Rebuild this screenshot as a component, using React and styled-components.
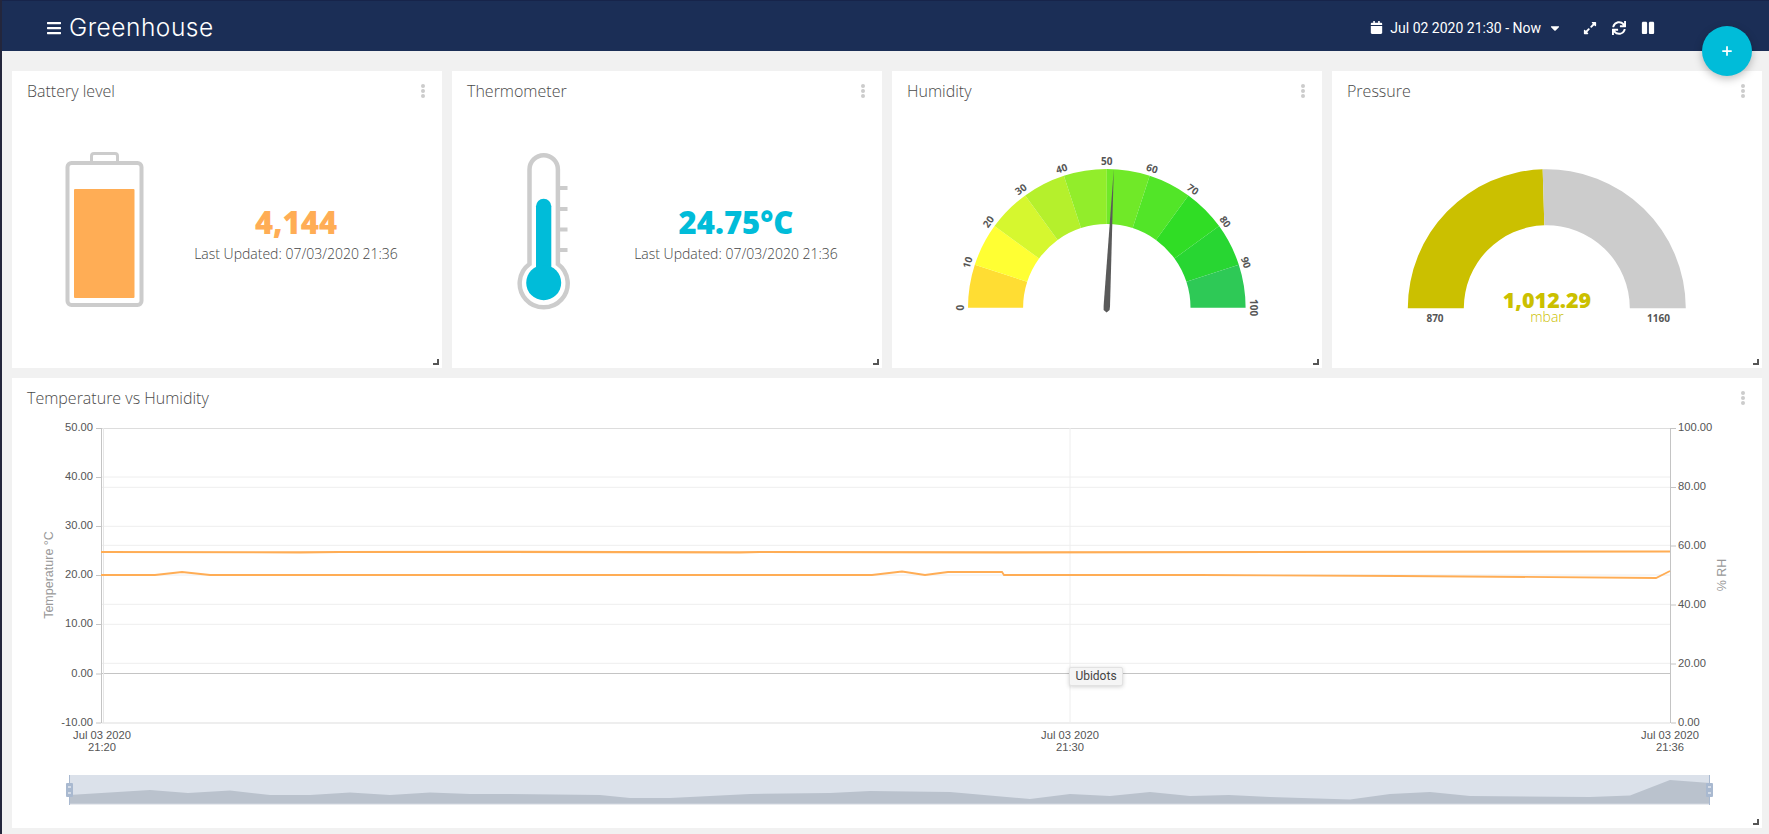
import React from 'react';
import styled, { createGlobalStyle } from 'styled-components';
import { FaBars, FaCalendar, FaCaretDown, FaExpandAlt, FaPause, FaSync } from 'react-icons/fa';
import { Plus } from 'lucide-react';

const GlobalStyle = createGlobalStyle`
    html, body {
        margin: 0;
        padding: 0;
        height: 100%;
        overflow: hidden;
        background: #f1f1f1;
    }
`;

const Page = styled.div`
    position: relative;
    display: flex;
    width: 1769px;
    height: 834px;
    overflow: hidden;
    background: #f1f1f1;
    font-family: "Open Sans", sans-serif;
`;

const Strip = styled.div`
    flex: 0 0 2px;
    background: #23263c;
`;

const Main = styled.div`
    flex: 1;
    display: flex;
    flex-direction: column;
`;

const NavBar = styled.header`
    display: flex;
    align-items: center;
    justify-content: space-between;
    box-sizing: border-box;
    height: 51px;
    padding: 3px 114px 0 45px;
    background: #1b2e56;
    border-top: 1px solid #17244a;
    color: #fff;
`;

const Brand = styled.div`
    display: flex;
    align-items: center;
    gap: 8px;
    font-family: Inter, sans-serif;
    font-size: 24.5px;
    font-weight: 300;
    letter-spacing: 0.5px;
    svg {
        width: 14px;
        height: 16px;
    }
    span {
        margin-bottom: 2px;
    }
`;

const Tools = styled.div`
    display: flex;
    align-items: center;
    font-family: Roboto, sans-serif;
    font-size: 14px;
`;

const DateRange = styled.div`
    display: flex;
    align-items: center;
    gap: 7px;
    margin-right: 21px;
`;

const ToolIcon = styled.span`
    display: flex;
    width: ${(p) => p.$size}px;
    height: ${(p) => p.$size}px;
    margin-left: ${(p) => p.$gap || 0}px;
    svg {
        width: 100%;
        height: 100%;
    }
`;

const Board = styled.main`
    display: flex;
    flex-direction: column;
    gap: 10px;
    padding: 20px 7px 0 10px;
`;

const CardRow = styled.section`
    display: grid;
    grid-template-columns: repeat(4, 430px);
    gap: 10px;
`;

const Card = styled.article`
    position: relative;
    display: flex;
    flex-direction: column;
    height: ${(p) => p.$height}px;
    background: #fff;
`;

const CardTitle = styled.h3`
    flex: 0 0 40px;
    margin: 0;
    padding-left: 15px;
    color: #4a4a4a;
    font-size: 16px;
    font-weight: 300;
    line-height: 40px;
`;

const MenuDots = styled.div`
    position: absolute;
    top: 13px;
    right: 17px;
    display: flex;
    flex-direction: column;
    gap: 1px;
    i {
        width: 4px;
        height: 4px;
        border-radius: 50%;
        background: #ccc;
    }
`;

const ResizeHandle = styled.div`
    position: absolute;
    right: 3px;
    bottom: 3px;
    width: 4px;
    height: 4px;
    border-right: 2px solid #555;
    border-bottom: 2px solid #555;
`;

const MetricBody = styled.div`
    flex: 1;
    display: flex;
    padding-left: 17px;
`;

const MetricIcon = styled.svg`
    flex: 0 0 151px;
    width: 151px;
    height: 257px;
`;

const MetricText = styled.div`
    flex: 0 0 232px;
    display: flex;
    flex-direction: column;
    align-items: center;
    padding-top: 90px;
    white-space: nowrap;
`;

const MetricValue = styled.div`
    color: ${(p) => p.$color};
    font-size: 31px;
    font-weight: 800;
    line-height: 42px;
`;

const MetricDate = styled.div`
    color: #444;
    font-size: 14px;
    font-weight: 300;
    line-height: 22px;
`;

const GaugeSvg = styled.svg`
    width: 430px;
    height: 257px;
`;

const GaugeLabel = styled.text`
    fill: #555;
    font-family: "Open Sans", sans-serif;
    font-size: 10px;
    font-weight: 700;
    text-anchor: middle;
    dominant-baseline: central;
`;

const GaugeValue = styled.text`
    fill: #cbc000;
    font-family: "Open Sans", sans-serif;
    font-size: ${(p) => p.$size}px;
    font-weight: ${(p) => p.$weight};
    text-anchor: middle;
    dominant-baseline: central;
`;

const ChartSvg = styled.svg`
    display: block;
    width: 1750px;
    height: 410px;
`;

const AxisText = styled.text`
    fill: #555;
    font-family: "Liberation Sans", sans-serif;
    font-size: 11.2px;
    text-anchor: ${(p) => p.$anchor || 'middle'};
    dominant-baseline: central;
`;

const AxisTitle = styled.text`
    fill: #999;
    font-family: "Liberation Sans", sans-serif;
    font-size: 12.5px;
    text-anchor: middle;
    dominant-baseline: central;
`;

const ChartTip = styled.div`
    position: absolute;
    left: 1057px;
    top: 289px;
    box-sizing: border-box;
    width: 54px;
    height: 19px;
    background: #f5f5f5;
    border: 1px solid #e2e2e2;
    border-radius: 2px;
    box-shadow: 0 1px 4px rgba(0, 0, 0, 0.18);
    color: #444;
    font-family: Roboto, sans-serif;
    font-size: 12px;
    line-height: 17px;
    text-align: center;
`;

const AddButton = styled.button`
    position: absolute;
    left: 1702px;
    top: 26px;
    display: flex;
    align-items: center;
    justify-content: center;
    width: 50px;
    height: 50px;
    padding: 0;
    border: 0;
    border-radius: 50%;
    background: #00bcd9;
    box-shadow: 0 3px 8px rgba(0, 0, 0, 0.25);
    color: #fff;
    svg {
        width: 14px;
        height: 14px;
    }
`;

const polar = (cx, cy, r, deg) => {
    const rad = (deg * Math.PI) / 180;
    return [cx - r * Math.cos(rad), cy - r * Math.sin(rad)];
};

// ring slice, angles run clockwise from the left end of the gauge
const slice = (cx, cy, outer, inner, from, to) => {
    const [x1, y1] = polar(cx, cy, outer, from);
    const [x2, y2] = polar(cx, cy, outer, to);
    const [x3, y3] = polar(cx, cy, inner, to);
    const [x4, y4] = polar(cx, cy, inner, from);
    return `M${x1} ${y1}A${outer} ${outer} 0 0 1 ${x2} ${y2}L${x3} ${y3}A${inner} ${inner} 0 0 0 ${x4} ${y4}Z`;
};

const humidityColors = [
    '#ffdd33', '#ffff33', '#d6f72f', '#b5f02c', '#92ed2b',
    '#70e928', '#52e528', '#30dd25', '#28d632', '#2ec956',
];

const leftTicks = [
    ['50.00', 428], ['40.00', 477], ['30.00', 526], ['20.00', 575],
    ['10.00', 624], ['0.00', 673.5], ['-10.00', 722.5],
];
const rightTicks = [
    ['100.00', 428], ['80.00', 487], ['60.00', 545.5],
    ['40.00', 604.5], ['20.00', 663.5], ['0.00', 722.5],
];
const xTicks = [
    ['21:20', 102],
    ['21:30', 1070],
    ['21:36', 1670],
];

const upperLine = '101,552 300,552.3 340,552 500,551.8 740,552.4 760,552 1000,552.3 1670,551.5';
const lowerLine = '101,575 155,575 182,572 210,575 872,575 902,571.5 925,575 948,572 1002,572 1004,575 1200,575 1400,576 1656,578 1670,571';
const overview = [
    [69, 795], [150, 790], [188, 793], [230, 790.5], [270, 795], [310, 795], [350, 792.5],
    [390, 795], [430, 792.5], [470, 794], [510, 794], [600, 795], [630, 798], [670, 798],
    [750, 794], [830, 793], [870, 791], [950, 792], [1030, 799], [1070, 794], [1110, 796],
    [1150, 792], [1190, 796], [1229, 795], [1270, 797], [1350, 799.5], [1390, 794], [1430, 792],
    [1470, 796], [1590, 797], [1630, 795.5], [1670, 780], [1710, 783],
];

function CardChrome({ title }) {
    return (
        <>
            <CardTitle>{title}</CardTitle>
            <MenuDots><i /><i /><i /></MenuDots>
            <ResizeHandle />
        </>
    );
}

function BatteryCard() {
    return (
        <Card $height={297}>
            <CardChrome title="Battery level" />
            <MetricBody>
                <MetricIcon viewBox="29 111 151 257">
                    <path d="M91.5 161v-5a2.5 2.5 0 0 1 2.5-2.5h21a2.5 2.5 0 0 1 2.5 2.5v5" fill="none" stroke="#ccc" strokeWidth="3" />
                    <rect x="67.5" y="163" width="74" height="142" rx="4" fill="none" stroke="#ccc" strokeWidth="4" />
                    <rect x="74" y="189" width="60.5" height="109" rx="1" fill="#ffad55" />
                </MetricIcon>
                <MetricText>
                    <MetricValue $color="#ffad55">4,144</MetricValue>
                    <MetricDate>Last Updated: 07/03/2020 21:36</MetricDate>
                </MetricText>
            </MetricBody>
        </Card>
    );
}

function ThermometerCard() {
    return (
        <Card $height={297}>
            <CardChrome title="Thermometer" />
            <MetricBody>
                <MetricIcon viewBox="469 111 151 257">
                    {[188, 209, 229.5, 250].map((y) => (
                        <rect key={y} x="559" y={y - 2} width="8.5" height="4" fill="#ccc" />
                    ))}
                    <path
                        d="M529.5 264V169.5a14.2 14.2 0 0 1 28.4 0V264a24 24 0 1 1-28.4 0Z"
                        fill="#fff"
                        stroke="#ccc"
                        strokeWidth="4.5"
                    />
                    <rect x="536" y="198.7" width="15.3" height="84" rx="7.6" fill="#00bcd9" />
                    <circle cx="543.7" cy="282.7" r="17.5" fill="#00bcd9" />
                </MetricIcon>
                <MetricText>
                    <MetricValue $color="#00bcd9">24.75°C</MetricValue>
                    <MetricDate>Last Updated: 07/03/2020 21:36</MetricDate>
                </MetricText>
            </MetricBody>
        </Card>
    );
}

function HumidityCard() {
    const cx = 1106.8;
    const cy = 307.7;
    return (
        <Card $height={297}>
            <CardChrome title="Humidity" />
            <GaugeSvg viewBox="892 111 430 257">
                {humidityColors.map((color, i) => (
                    <path key={color} d={slice(cx, cy, 138.8, 83.7, i * 18, (i + 1) * 18)} fill={color} />
                ))}
                {humidityColors.concat('end').map((_, i) => {
                    const [x, y] = polar(cx, cy, 146.7, i * 18);
                    return (
                        <GaugeLabel key={i} x={x} y={y} transform={`rotate(${i * 18 - 90} ${x} ${y})`}>
                            {i * 10}
                        </GaugeLabel>
                    );
                })}
                <path d="M1113.8 169 1110 306.5 1109.6 310 1106.6 312.4 1103.6 310 1103.6 306Z" fill="#5a5a5a" />
            </GaugeSvg>
        </Card>
    );
}

function PressureCard() {
    const cx = 1546.8;
    const cy = 308.3;
    return (
        <Card $height={297}>
            <CardChrome title="Pressure" />
            <GaugeSvg viewBox="1332 111 430 257">
                <path d={slice(cx, cy, 139, 83, 0, 88.3)} fill="#cbc000" />
                <path d={slice(cx, cy, 139, 83, 88.3, 180)} fill="#ccc" />
                <GaugeValue x="1547" y="299.5" $size={21.5} $weight={800}>1,012.29</GaugeValue>
                <GaugeValue x="1547" y="316.5" $size={14} $weight={300}>mbar</GaugeValue>
                <GaugeLabel x="1435" y="318">870</GaugeLabel>
                <GaugeLabel x="1658.5" y="318">1160</GaugeLabel>
            </GaugeSvg>
        </Card>
    );
}

function ChartCard() {
    const gridRows = [477, 487.3, 526.3, 545.3, 575, 604.3, 624.3, 663.3];
    const areaPoints = overview.map((p) => p.join(',')).join(' ');
    return (
        <Card $height={450}>
            <CardChrome title="Temperature vs Humidity" />
            <ChartSvg viewBox="12 418 1750 410">
                {gridRows.map((y) => (
                    <line key={y} x1="101.5" x2="1670" y1={y} y2={y} stroke="#eee" />
                ))}
                <line x1="101.5" x2="1670" y1="428.5" y2="428.5" stroke="#ddd" />
                <line x1="101.5" x2="1670" y1="723" y2="723" stroke="#ddd" />
                <line x1="101.5" x2="1670" y1="673.5" y2="673.5" stroke="#c4c4c4" />
                <line x1="1070" x2="1070" y1="428" y2="723" stroke="#eee" />
                <line x1="103.5" x2="103.5" y1="428" y2="723" stroke="#e6e6e6" />
                <line x1="101.5" x2="101.5" y1="428" y2="723" stroke="#c4c4c4" />
                <line x1="1670.5" x2="1670.5" y1="428" y2="723" stroke="#c4c4c4" />

                {leftTicks.map(([label, y]) => (
                    <g key={label}>
                        <line x1="96" x2="101" y1={y + 0.5} y2={y + 0.5} stroke="#c4c4c4" />
                        <AxisText x="93" y={y - 1} $anchor="end">{label}</AxisText>
                    </g>
                ))}
                {rightTicks.map(([label, y]) => (
                    <g key={label}>
                        <line x1="1671" x2="1676" y1={y + 0.5} y2={y + 0.5} stroke="#c4c4c4" />
                        <AxisText x="1678" y={y - 1} $anchor="start">{label}</AxisText>
                    </g>
                ))}
                {xTicks.map(([time, x]) => (
                    <g key={time}>
                        <AxisText x={x} y="735">Jul 03 2020</AxisText>
                        <AxisText x={x} y="747">{time}</AxisText>
                    </g>
                ))}
                <AxisTitle x="48.5" y="575" transform="rotate(-90 48.5 575)">Temperature °C</AxisTitle>
                <AxisTitle x="1722" y="575" transform="rotate(-90 1722 575)">% RH</AxisTitle>

                <polyline points={upperLine} fill="none" stroke="#ffad55" strokeWidth="2.2" />
                <polyline points={lowerLine} fill="none" stroke="#ffad55" strokeWidth="1.8" />

                <rect x="69" y="775" width="1641" height="29" fill="#dbe1ea" />
                <polygon points={`69,804 ${areaPoints} 1710,804`} fill="#bac2cd" />
                <line x1="69" x2="1710" y1="804" y2="804" stroke="#d3d8e0" strokeWidth="1" />
                <line x1="69.5" x2="69.5" y1="775" y2="805" stroke="#a9b9d0" />
                <line x1="1709.5" x2="1709.5" y1="775" y2="805" stroke="#a9b9d0" />
                {[69.5, 1709.5].map((x) => (
                    <g key={x}>
                        <rect x={x - 3.5} y="783" width="7" height="14" rx="1" fill="#a9b9d0" />
                        <rect x={x - 1.5} y="786.5" width="3" height="1" fill="#fff" />
                        <rect x={x - 1.5} y="792.5" width="3" height="1" fill="#fff" />
                    </g>
                ))}
            </ChartSvg>
            <ChartTip>Ubidots</ChartTip>
        </Card>
    );
}

function App() {
    return (
        <Page>
            <GlobalStyle />
            <Strip />
            <Main>
                <NavBar>
                    <Brand>
                        <FaBars />
                        <span>Greenhouse</span>
                    </Brand>
                    <Tools>
                        <DateRange>
                            <ToolIcon $size={13}><FaCalendar /></ToolIcon>
                            <span>Jul 02 2020 21:30 - Now</span>
                            <ToolIcon $size={14}><FaCaretDown /></ToolIcon>
                        </DateRange>
                        <ToolIcon $size={14}><FaExpandAlt /></ToolIcon>
                        <ToolIcon $size={14} $gap={15}><FaSync /></ToolIcon>
                        <ToolIcon $size={14} $gap={15}><FaPause /></ToolIcon>
                    </Tools>
                </NavBar>
                <Board>
                    <CardRow>
                        <BatteryCard />
                        <ThermometerCard />
                        <HumidityCard />
                        <PressureCard />
                    </CardRow>
                    <ChartCard />
                </Board>
            </Main>
            <AddButton><Plus strokeWidth={3} /></AddButton>
        </Page>
    );
}

export default App;
